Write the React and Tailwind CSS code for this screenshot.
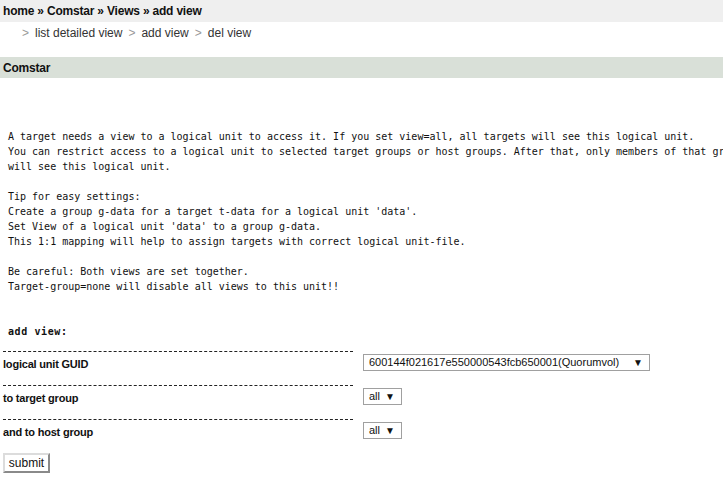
import React from 'react';

const mono = { fontFamily: '"DejaVu Sans Mono", "Liberation Mono", monospace' };

function FakeSelect({ value, width }) {
  return (
    <div className={`flex h-[17px] items-center justify-between border border-[#a0a0a0] bg-white pl-[5px] pr-[6px] text-[11px] text-[#111] ${width}`}>
      <span className="whitespace-nowrap">{value}</span>
      <span className="text-[10px] leading-none">▼</span>
    </div>
  );
}

const rows = [
  { label: 'logical unit GUID', value: '600144f021617e550000543fcb650001(Quorumvol)', width: 'w-[287px]' },
  { label: 'to target group', value: 'all', width: 'w-[39px]' },
  { label: 'and to host group', value: 'all', width: 'w-[39px]' },
];

export default function App() {
  return (
    <div className="min-h-[484px] w-[723px] overflow-hidden bg-white text-[#111]" style={{ fontFamily: '"Liberation Sans", Arial, sans-serif' }}>
      {/* breadcrumb */}
      <div className="flex h-[22px] items-center bg-[#efefef] pl-[3px] text-[12px] font-bold tracking-[-0.2px]">
        home &raquo; Comstar &raquo; Views &raquo; add view
      </div>

      {/* sub menu */}
      <div className="flex h-[21px] items-center gap-[6px] pl-[22px] text-[12px] text-[#333]">
        <span className="text-[#999]">&gt;</span><span>list detailed view</span>
        <span className="text-[#999]">&gt;</span><span>add view</span>
        <span className="text-[#999]">&gt;</span><span>del view</span>
      </div>

      <div className="mt-[14px] flex h-[21px] items-center bg-[#d9e0d8] pl-[3px] text-[12px] font-bold tracking-[-0.2px]">
        Comstar
      </div>

      <pre className="mt-[51px] pl-[8px] text-[10px] leading-[15px] whitespace-pre" style={mono}>
{`A target needs a view to a logical unit to access it. If you set view=all, all targets will see this logical unit.
You can restrict access to a logical unit to selected target groups or host groups. After that, only members of that group
will see this logical unit.

Tip for easy settings:
Create a group g-data for a target t-data for a logical unit 'data'.
Set View of a logical unit 'data' to a group g-data.
This 1:1 mapping will help to assign targets with correct logical unit-file.

Be careful: Both views are set together.
Target-group=none will disable all views to this unit!!`}
      </pre>

      <div className="mt-[30px] pl-[8px] text-[10px] font-bold tracking-[0.6px]" style={mono}>add view:</div>

      <div className="mt-[12px] pl-[3px]">
        {rows.map((r) => (
          <div key={r.label} className="flex h-[34px]">
            <div className="w-[350px] border-t border-dashed border-[#222] pt-[4px] text-[11px] font-bold tracking-[-0.2px]">
              {r.label}
            </div>
            <div className="ml-[10px] pt-[3px]">
              <FakeSelect value={r.value} width={r.width} />
            </div>
          </div>
        ))}
      </div>

      <div className="flex pl-[3px]">
        <button className="block h-[20px] w-[47px] border-2 border-t-[#dcdcdc] border-l-[#dcdcdc] border-b-[#8a8a8a] border-r-[#8a8a8a] bg-white text-[12px] leading-none text-[#111]">
          submit
        </button>
      </div>
    </div>
  );
}
